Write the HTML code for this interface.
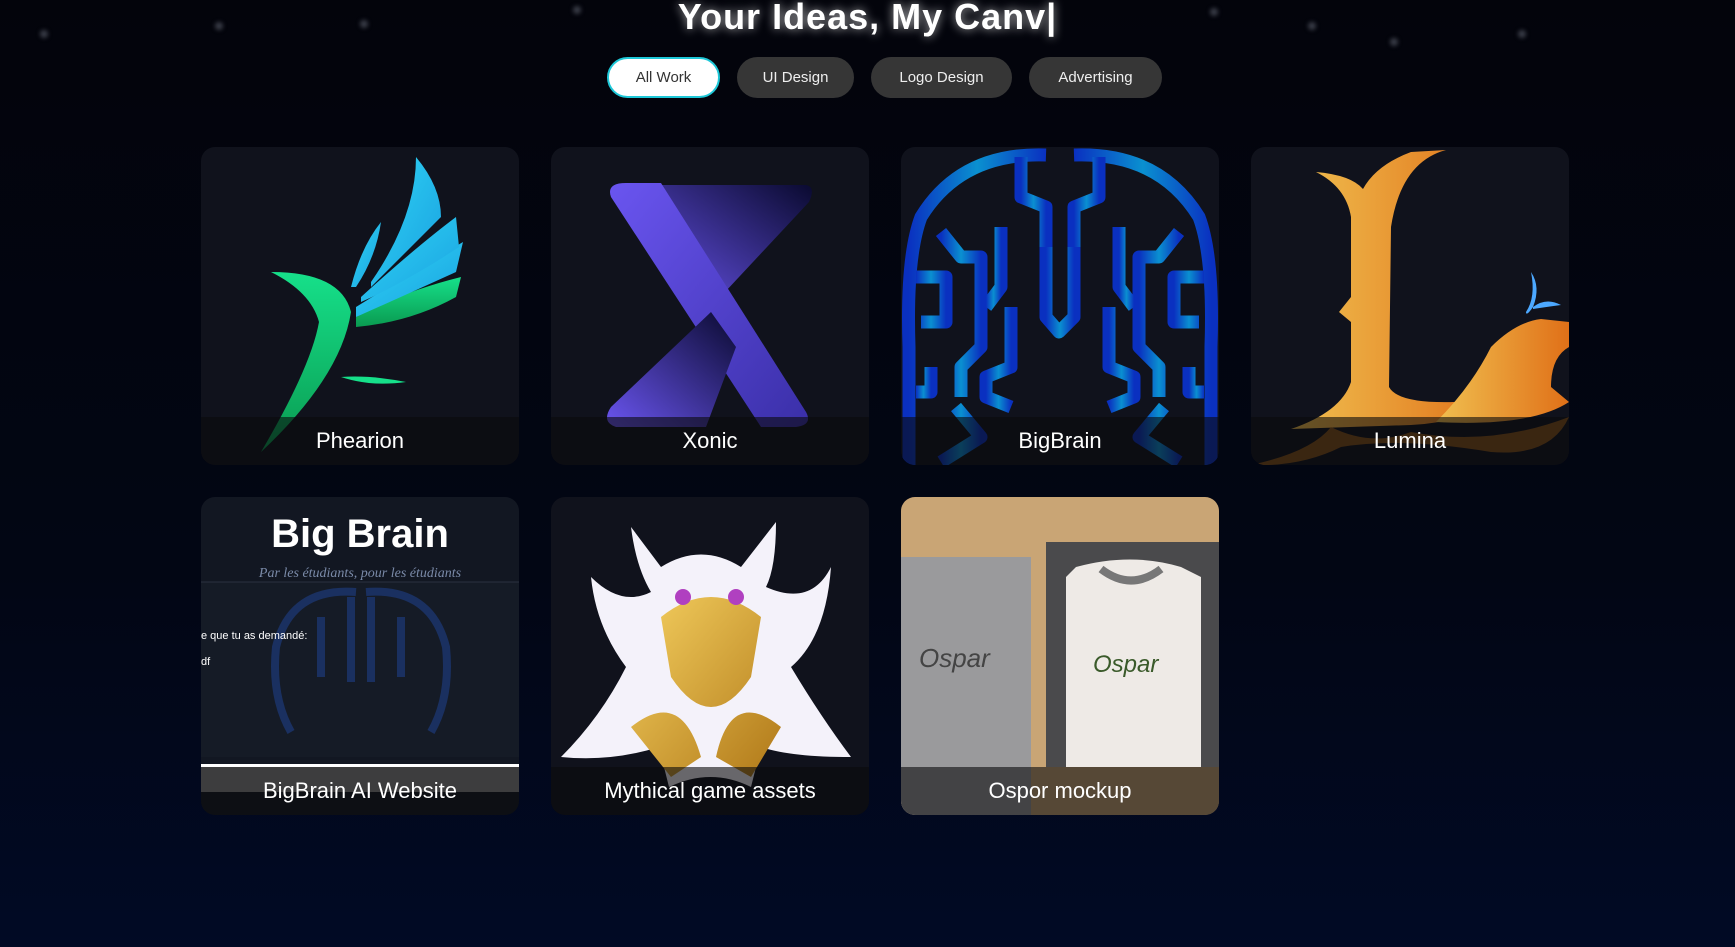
<!DOCTYPE html>
<html><head><meta charset="utf-8"><style>
*{margin:0;padding:0;box-sizing:border-box}
html,body{width:1735px;height:947px;overflow:hidden}
body{background:linear-gradient(#03040b 0%,#020614 60%,#010a25 100%);font-family:"Liberation Sans",sans-serif;color:#fff;position:relative}
.dot{position:absolute;width:8px;height:8px;border-radius:50%;background:#3a3d48;filter:blur(2px)}
h1{position:absolute;top:-4px;left:0;width:1735px;text-align:center;font-size:36px;font-weight:bold;letter-spacing:1px;text-shadow:0 0 10px rgba(255,255,255,.7)}
.btn{position:absolute;top:57px;height:41px;border-radius:21px;background:#363636;color:#eee;font-size:15px;display:flex;align-items:center;justify-content:center}
.btn.on{background:#fff;color:#333;border:2px solid #1ec8d8}
.card{position:absolute;width:318px;height:318px;border-radius:14px;overflow:hidden;background:#10121c}
.card svg{position:absolute;left:0;top:0}
.cap{position:absolute;left:0;bottom:0;width:100%;height:48px;background:rgba(10,10,12,.6);text-align:center;font-size:22px;line-height:48px;color:#fff}
</style></head><body>
<div class="dot" style="left:40px;top:30px"></div><div class="dot" style="left:215px;top:22px"></div><div class="dot" style="left:360px;top:20px"></div><div class="dot" style="left:573px;top:6px"></div><div class="dot" style="left:1210px;top:8px"></div><div class="dot" style="left:1308px;top:22px"></div><div class="dot" style="left:1518px;top:30px"></div><div class="dot" style="left:1390px;top:38px"></div>
<h1>Your Ideas, My Canv|</h1>
<div class="btn on" style="left:607px;width:113px">All Work</div>
<div class="btn" style="left:737px;width:117px">UI Design</div>
<div class="btn" style="left:871px;width:141px">Logo Design</div>
<div class="btn" style="left:1029px;width:133px">Advertising</div>

<div class="card" style="left:201px;top:147px"><svg width="318" height="318">
<defs><linearGradient id="g1" x1="0" y1="0" x2="0" y2="1"><stop offset="0" stop-color="#16e08a"/><stop offset="1" stop-color="#0a9a50"/></linearGradient><linearGradient id="g2" x1="0" y1="0" x2="1" y2="1"><stop offset="0" stop-color="#2fd5f5"/><stop offset="1" stop-color="#1aa0e0"/></linearGradient></defs>
<path d="M70 125 Q140 125 150 165 Q140 230 60 305 Q110 220 118 175 Q110 145 70 125Z" fill="url(#g1)"/>
<path d="M155 170 Q200 145 260 130 L255 150 Q210 175 155 180Z" fill="url(#g1)"/>
<path d="M155 160 Q220 120 262 95 L255 125 Q200 150 155 170Z" fill="url(#g2)"/>
<path d="M160 150 Q215 100 255 70 L258 100 Q205 135 160 155Z" fill="url(#g2)"/>
<path d="M170 135 Q215 70 215 10 Q240 40 240 70 Q200 110 170 140Z" fill="url(#g2)"/>
<path d="M150 140 Q160 100 180 75 Q175 110 155 140Z" fill="url(#g2)"/>
<path d="M140 230 Q170 240 205 235 Q170 228 140 230Z" fill="#16e08a"/>
</svg><div class="cap">Phearion</div></div>

<div class="card" style="left:551px;top:147px"><svg width="318" height="318">
<defs><linearGradient id="g3" x1="0" y1="0" x2="1" y2="1"><stop offset="0" stop-color="#6a55f0"/><stop offset="1" stop-color="#3a2fa8"/></linearGradient><linearGradient id="g4" x1="1" y1="0" x2="0" y2="1"><stop offset="0" stop-color="#0a0a30"/><stop offset="1" stop-color="#6a55f0"/></linearGradient></defs>
<path d="M95 38 L255 38 Q265 40 258 55 L160 160 L150 150 Z" fill="url(#g4)"/>
<path d="M60 50 Q55 36 75 36 L110 36 L255 265 Q262 278 245 280 L210 280Z" fill="url(#g3)"/>
<path d="M160 165 L185 200 L155 280 L65 280 Q50 275 60 260Z" fill="url(#g4)"/>
</svg><div class="cap">Xonic</div></div>

<div class="card" style="left:901px;top:147px"><svg width="318" height="318" fill="none" stroke-width="13" stroke-linejoin="round">
<defs><linearGradient id="g5" x1="0" y1="0" x2="1" y2="0"><stop offset="0" stop-color="#0a30c0"/><stop offset=".5" stop-color="#0a90d0"/><stop offset="1" stop-color="#0a30c0"/></linearGradient></defs>
<g stroke="url(#g5)">
<path d="M145 8 Q60 5 20 70 Q5 110 8 200 L8 318"/><path d="M173 8 Q258 5 298 70 Q313 110 310 200 L310 318"/>
<path d="M120 10 L120 50 L145 60 L145 160"/><path d="M198 10 L198 50 L173 60 L173 160"/>
<path d="M145 100 L145 170 L158 185 L173 170 L173 100"/>
<path d="M40 85 L60 110 L80 110 L80 200 L60 220 L60 250"/><path d="M278 85 L258 110 L238 110 L238 200 L258 220 L258 250"/>
<path d="M15 130 L45 130 L45 175 L20 175"/><path d="M303 130 L273 130 L273 175 L298 175"/>
<path d="M100 80 L100 140 L85 160"/><path d="M218 80 L218 140 L233 160"/>
<path d="M110 160 L110 220 L85 230 L85 250 L110 260"/><path d="M208 160 L208 220 L233 230 L233 250 L208 260"/>
<path d="M30 220 L30 245 L15 245"/><path d="M288 220 L288 245 L303 245"/>
<path d="M55 260 L80 290 L40 315"/><path d="M263 260 L238 290 L278 315"/>
</g></svg><div class="cap">BigBrain</div></div>

<div class="card" style="left:1251px;top:147px"><svg width="318" height="318">
<defs><linearGradient id="g6" x1="0" y1="0" x2="1" y2="0"><stop offset="0" stop-color="#f0c050"/><stop offset="1" stop-color="#e07018"/></linearGradient></defs>
<path d="M65 25 Q100 28 112 42 Q125 18 160 5 L195 3 Q150 15 140 80 L138 240 Q150 262 245 252 Q215 275 160 278 L40 282 Q90 265 100 235 L100 175 L88 165 L100 150 L100 70 Q95 40 65 25Z" fill="url(#g6)"/>
<path d="M185 275 Q220 240 240 200 Q265 175 290 172 L318 175 L318 200 Q300 210 300 240 L318 255 Q280 280 185 275Z" fill="url(#g6)"/>
<path d="M0 318 Q60 305 80 280 Q120 300 160 285 Q240 300 318 270 Q300 310 240 305 Q150 290 90 300 Q50 320 0 318Z" fill="#a0601a" opacity=".8"/>
<path d="M280 125 Q290 140 282 160 Q275 170 275 165 Q285 150 280 125Z M282 160 Q295 150 310 158 Q295 160 282 162Z" fill="#4ca8ff"/>
</svg><div class="cap">Lumina</div></div>

<div class="card" style="left:201px;top:497px;background:#121722"><svg width="318" height="318">
<rect x="0" y="85" width="318" height="175" fill="#151b26"/><line x1="0" y1="85" x2="318" y2="85" stroke="#2a3040"/>
<g fill="none" stroke="#1a3060" stroke-width="8"><path d="M155 95 Q90 90 75 150 Q70 200 90 235"/><path d="M165 95 Q230 90 245 150 Q250 200 230 235"/><path d="M150 100 L150 185 M170 100 L170 185 M120 120 L120 180 M200 120 L200 180"/></g>
<text x="159" y="50" text-anchor="middle" font-size="40" font-weight="bold" fill="#fff" font-family="Liberation Sans">Big Brain</text>
<text x="159" y="80" text-anchor="middle" font-size="14" font-style="italic" fill="#7a8aa8" font-family="Liberation Serif">Par les étudiants, pour les étudiants</text>
<text x="0" y="142" font-size="11" fill="#fff">e que tu as demandé:</text><text x="0" y="168" font-size="11" fill="#fff">df</text>
<rect x="0" y="267" width="318" height="3" fill="#fff"/><rect x="0" y="270" width="318" height="25" fill="#8a8a8a"/>
</svg><div class="cap">BigBrain AI Website</div></div>

<div class="card" style="left:551px;top:497px"><svg width="318" height="318">
<defs><linearGradient id="g7" x1="0" y1="0" x2="1" y2="1"><stop offset="0" stop-color="#f5d060"/><stop offset="1" stop-color="#b07818"/></linearGradient></defs>
<path d="M80 30 L110 70 Q150 45 190 70 L225 25 Q225 70 215 90 Q260 110 280 70 Q275 140 240 170 Q270 220 300 260 Q240 260 210 250 L200 290 Q160 270 118 290 L108 250 Q60 265 10 260 Q50 220 75 170 Q45 130 40 80 Q70 110 100 95 Q85 70 80 30Z" fill="#f4f2fa"/>
<path d="M110 120 Q160 80 210 120 L200 180 Q160 240 120 180Z M80 230 Q130 190 150 260 L120 280Z M230 230 Q180 190 165 260 L200 280Z" fill="url(#g7)"/>
<circle cx="132" cy="100" r="8" fill="#b040c0"/><circle cx="185" cy="100" r="8" fill="#b040c0"/>
</svg><div class="cap">Mythical game assets</div></div>

<div class="card" style="left:901px;top:497px;background:#c9a575"><svg width="318" height="318">
<rect x="0" y="60" width="130" height="258" fill="#9a9a9c"/>
<rect x="145" y="45" width="173" height="225" fill="#4a4a4c"/>
<path d="M175 70 Q230 55 280 70 L300 80 L300 270 L165 270 L165 80Z" fill="#eeeae6"/>
<path d="M200 72 Q230 95 260 72" fill="none" stroke="#777" stroke-width="8"/>
<text x="18" y="170" font-size="26" font-style="italic" fill="#444">Ospar</text>
<text x="192" y="175" font-size="24" font-style="italic" fill="#3a5a2a">Ospar</text>
</svg><div class="cap">Ospor mockup</div></div>
</body></html>
